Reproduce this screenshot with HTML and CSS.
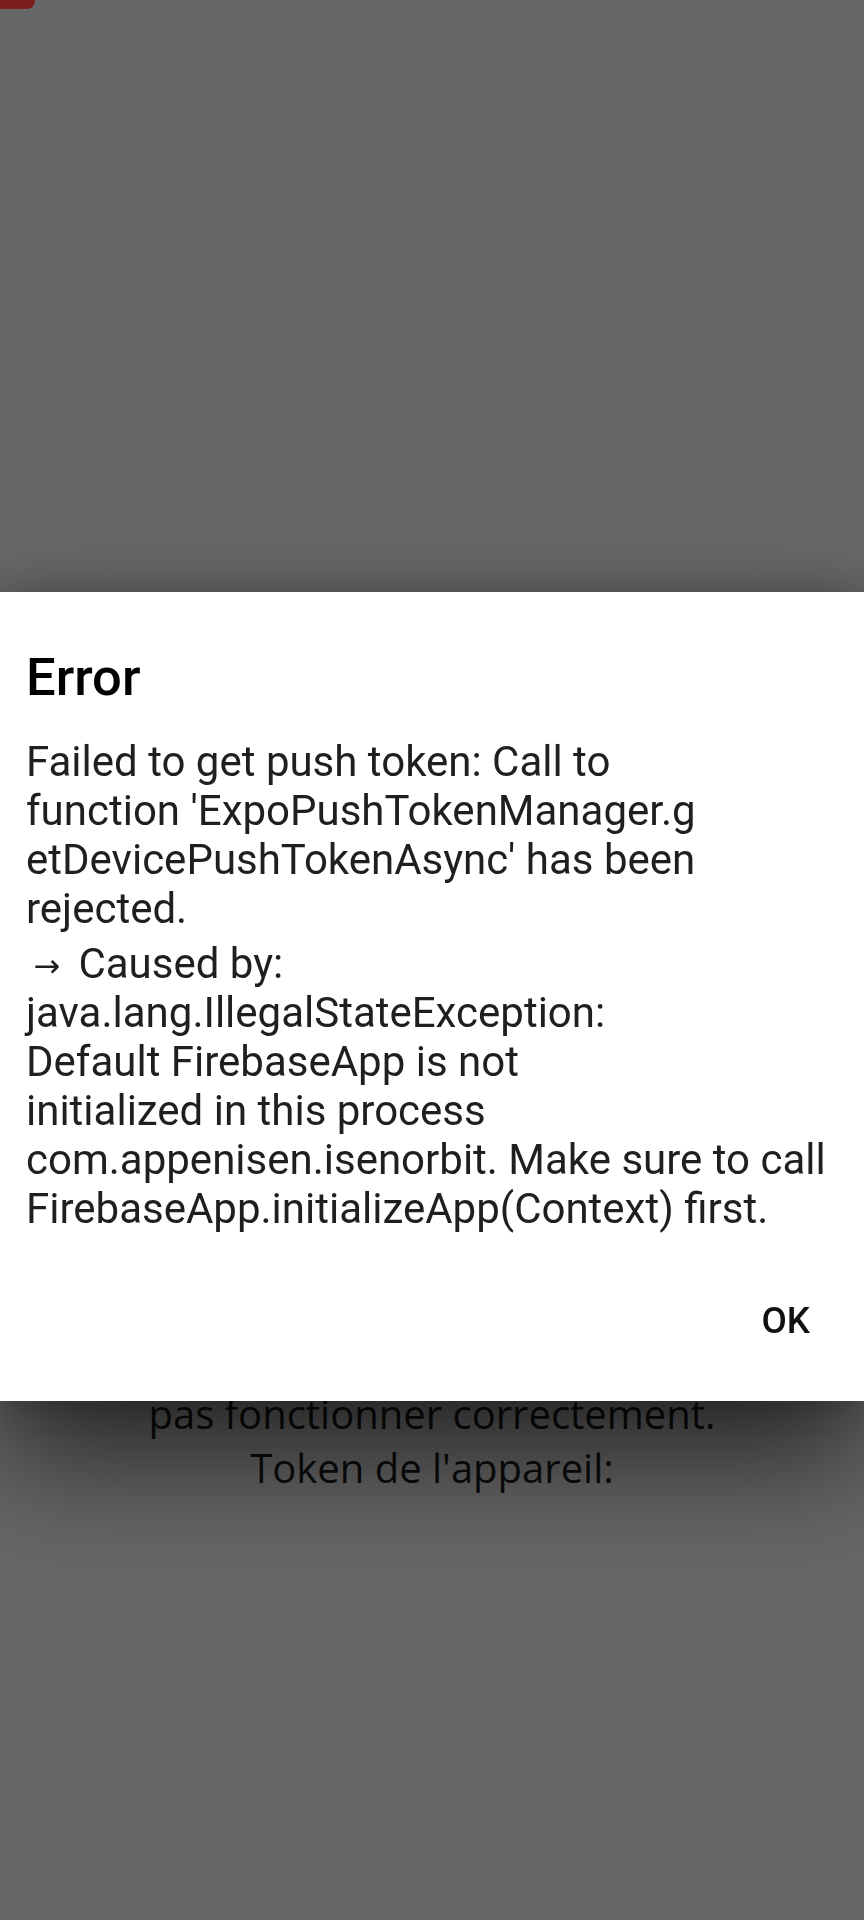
FILE: index.html
```html
<!DOCTYPE html>
<html lang="fr">
<head>
<meta charset="utf-8">
<title>Error</title>
<link rel="stylesheet" href="styles.css">
</head>
<body>
<main class="page">
  <p class="page-text">pas fonctionner correctement.<br>Token de l'appareil:</p>
</main>
<div class="scrim">
  <div class="record-pill"></div>
  <section class="dialog" role="alertdialog" aria-labelledby="dlg-title">
    <h1 class="dialog-title" id="dlg-title">Error</h1>
    <div class="dialog-body">
      <p class="msg">Failed to get push token: Call to<br>function 'ExpoPushTokenManager.g<br>etDevicePushTokenAsync' has been<br>rejected.</p>
      <p class="msg cause"><span class="arrow">→</span> Caused by:<br>java.lang.IllegalStateException:<br>Default FirebaseApp is not<br>initialized in this process<br>com.appenisen.isenorbit. Make sure to call<br>FirebaseApp.initializeApp(Context) first.</p>
    </div>
    <div class="dialog-actions">
      <button class="btn-ok" type="button">OK</button>
    </div>
  </section>
</div>
</body>
</html>
```
FILE: styles.css
```css
html, body {
  margin: 0;
  padding: 0;
}
body {
  width: 864px;
  height: 1920px;
  background: #ffffff;
  overflow: hidden;
  font-family: Roboto, "Noto Sans", sans-serif;
}
.page {
  padding-top: 1387px;
}
.page-text {
  margin: 0;
  text-align: center;
  font-family: "Open Sans", sans-serif;
  font-size: 40px;
  line-height: 1.362;
  color: #1e1e1e;
}
.scrim {
  position: fixed;
  inset: 0;
  background: rgba(0, 0, 0, 0.6);
  display: flex;
  flex-direction: column;
  padding-top: 592px;
  box-sizing: border-box;
}
.record-pill {
  position: absolute;
  top: -12px;
  left: -10px;
  width: 45px;
  height: 21px;
  border-radius: 8px;
  background: #7b1c1e;
  box-shadow: 0 0 3px rgba(120, 130, 130, 0.6);
}
.dialog {
  background: #ffffff;
  height: 809px;
  box-sizing: border-box;
  padding: 54px 26px 0 26px;
  display: flex;
  flex-direction: column;
  box-shadow: 0 60px 110px rgba(0, 0, 0, 0.6), 0 0 40px rgba(0, 0, 0, 0.25);
}
.dialog-title {
  margin: 0 0 29px 0;
  font-family: Roboto, sans-serif;
  font-weight: 500;
  font-size: 52.5px;
  line-height: normal;
  color: #000000;
}
.dialog-body {
  color: #1f1f1f;
  font-size: 42px;
  line-height: normal;
  white-space: nowrap;
}
.msg {
  margin: 0;
}
.cause {
  margin-top: 6px;
}
.arrow {
  display: inline-block;
  width: 42px;
  text-align: center;
  font-family: "DejaVu Sans", sans-serif;
  font-size: 32px;
  line-height: 1;
  vertical-align: 1px;
}
.dialog-actions {
  display: flex;
  justify-content: flex-end;
  padding: 66px 2px 0 0;
}
.btn-ok {
  border: 0;
  background: transparent;
  padding: 0 26px;
  font-family: Roboto, sans-serif;
  font-weight: 500;
  font-size: 36.75px;
  line-height: normal;
  color: #111111;
  cursor: pointer;
}
```
